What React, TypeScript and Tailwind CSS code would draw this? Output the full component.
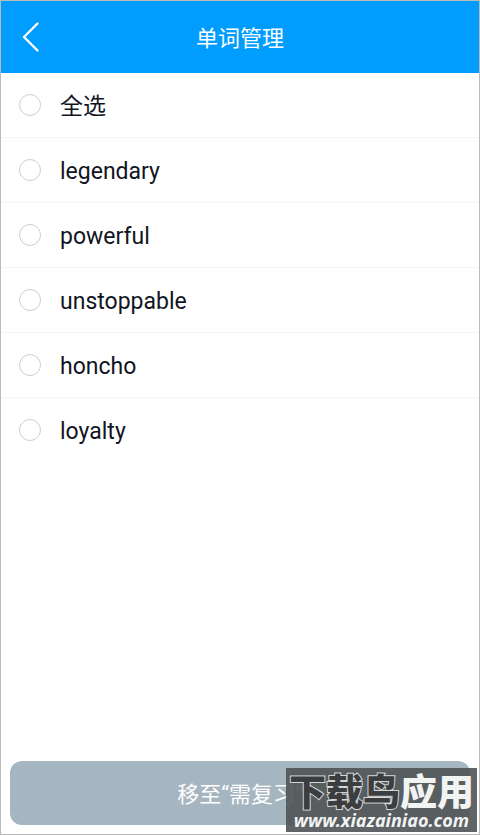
import React, { useState } from "react";

const words = ["legendary", "powerful", "unstoppable", "honcho", "loyalty"];

interface WordRowProps {
  label: string;
  checked: boolean;
  last?: boolean;
  onChange: () => void;
}

const WordRow: React.FC<WordRowProps> = ({ label, checked, last, onChange }) => {
  return (
    <li className={last ? "" : "border-b border-[#f4f6f7]"}>
      <label className="flex h-16 items-center gap-[19px] px-[18px] text-[23px] leading-8 text-[#12151f]">
        <input
          type="checkbox"
          checked={checked}
          onChange={onChange}
          className="size-[22px] shrink-0 appearance-none rounded-full border border-[#c9d0d5] bg-white checked:border-[#009dff] checked:bg-[#009dff]"
        />
        <span className="pt-1">{label}</span>
      </label>
    </li>
  );
};

const Watermark = () => {
  return (
    <div className="absolute right-0.5 bottom-0.5 flex h-16 w-[191px] flex-col items-center bg-[#505355]/90 pt-1 font-['Noto_Sans','Noto_Sans_CJK_SC',sans-serif] whitespace-nowrap text-[#f2f3f3]">
      <div className="flex text-[37px] leading-10 font-black">
        <span className="text-[#3b3d3f] [-webkit-text-stroke:2px_#d4d6d7] [paint-order:stroke_fill]">下载鸟</span>
        <span>应用</span>
      </div>
      <div className="text-[18px] leading-4 font-bold italic">www.xiazainiao.com</div>
    </div>
  );
};

export default function App() {
  const [selected, setSelected] = useState<string[]>([]);
  const allSelected = selected.length === words.length;

  const toggle = (word: string) => {
    setSelected(
      selected.includes(word) ? selected.filter((w) => w !== word) : [...selected, word]
    );
  };

  return (
    <div className="relative flex min-h-screen flex-col border border-[#bababa] bg-white font-[Roboto,'Noto_Sans_CJK_SC',sans-serif]">
      {/* Header */}
      <header className="grid h-[72px] grid-cols-[60px_1fr_60px] items-center bg-[#009dff] text-white">
        <button type="button" aria-label="返回" className="flex h-full items-center pl-5">
          <svg width="20" height="32" viewBox="0 0 20 32" fill="none" stroke="currentColor" strokeWidth="2.4" strokeLinecap="round" strokeLinejoin="round">
            <path d="M16.5 2.5 L3 16 L16.5 29.5" />
          </svg>
        </button>
        <h1 className="pt-1 text-center text-[22px] leading-8">单词管理</h1>
      </header>

      {/* Word list */}
      <ul className="flex-1">
        <WordRow
          label="全选"
          checked={allSelected}
          onChange={() => setSelected(allSelected ? [] : words)}
        />
        {words.map((word, index) => (
          <WordRow
            key={word}
            label={word}
            checked={selected.includes(word)}
            last={index === words.length - 1}
            onChange={() => toggle(word)}
          />
        ))}
      </ul>

      <footer className="px-[9px] pb-[9px]">
        <button type="button" className="h-16 w-full rounded-xl bg-[#a6b6c0] pt-1 text-[22px] leading-8 text-white">
          移至“需复习”
        </button>
      </footer>

      <Watermark />
    </div>
  );
}
